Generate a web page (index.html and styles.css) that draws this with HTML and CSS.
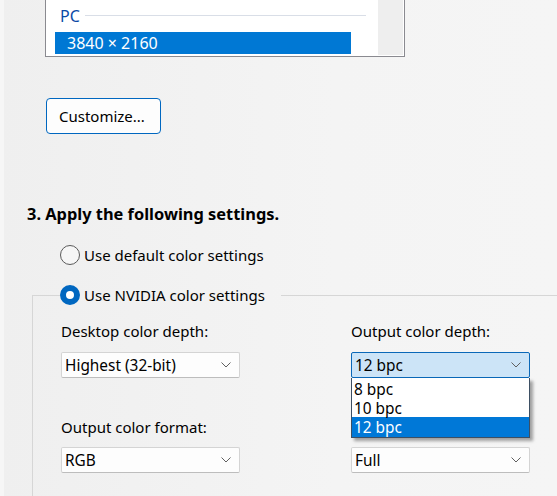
FILE: index.html
```html
<!DOCTYPE html>
<html lang="en">
  <head>
    <meta charset="UTF-8" />
    <meta name="viewport" content="width=device-width, initial-scale=1.0" />
    <title>Change resolution</title>
    <link rel="stylesheet" href="styles.css">
  </head>
  <body>
    <div class="page">
      <div class="mode-list">
        <div class="mode-items">
          <div class="mode-group">
            <span>PC</span>
            <span class="mode-rule"></span>
          </div>
          <div class="mode-item selected">3840 × 2160</div>
        </div>
        <div class="mode-scroll"></div>
      </div>

      <button type="button" class="btn">Customize...</button>

      <h2 class="step">3. Apply the following settings.</h2>

      <label class="radio">
        <span class="radio-dot"></span>
        Use default color settings
      </label>

      <fieldset class="group">
        <legend>
          <label class="radio checked">
            <span class="radio-dot"></span>
            Use NVIDIA color settings
          </label>
        </legend>

        <div class="fields">
          <div class="field">
            <div class="field-label">Desktop color depth:</div>
            <div class="combo">
              <span>Highest (32-bit)</span>
              <svg class="chevron" width="10" height="6" viewBox="0 0 10 6"><polyline points="0.5,0.5 5,5 9.5,0.5" /></svg>
            </div>
          </div>

          <div class="field">
            <div class="field-label">Output color depth:</div>
            <div class="combo focused">
              <span>12 bpc</span>
              <svg class="chevron" width="10" height="6" viewBox="0 0 10 6"><polyline points="0.5,0.5 5,5 9.5,0.5" /></svg>
              <!-- open drop-down -->
              <ul class="combo-menu">
                <li>8 bpc</li>
                <li>10 bpc</li>
                <li class="selected">12 bpc</li>
              </ul>
            </div>
          </div>

          <div class="field">
            <div class="field-label">Output color format:</div>
            <div class="combo">
              <span>RGB</span>
              <svg class="chevron" width="10" height="6" viewBox="0 0 10 6"><polyline points="0.5,0.5 5,5 9.5,0.5" /></svg>
            </div>
          </div>

          <div class="field">
            <!-- label sits under the open menu -->
            <div class="field-label"></div>
            <div class="combo">
              <span>Full</span>
              <svg class="chevron" width="10" height="6" viewBox="0 0 10 6"><polyline points="0.5,0.5 5,5 9.5,0.5" /></svg>
            </div>
          </div>
        </div>
      </fieldset>
    </div>
  </body>
</html>
```

FILE: styles.css
```css
* {
  margin: 0;
  padding: 0;
  box-sizing: border-box;
}

body {
  font-family: "Noto Sans", "Open Sans", sans-serif;
  font-size: 15px;
  color: #000;
  background: linear-gradient(90deg, #efefef 0%, #f4f4f4 60%, #f5f5f5 100%);
  height: 100vh;
  overflow: hidden;
}

.page {
  border-left: 4px solid #f6f6f6;
  height: 100%;
}

/* Resolution list (scrolled to the bottom) */
.mode-list {
  margin-left: 41px;
  width: 360px;
  height: 57px;
  display: flex;
  font-size: 16px;
  background: white;
  border: 1px solid #8a8a90;
  border-top: none;
  padding: 0 1px 1px 0;
}

.mode-items {
  flex: 1;
  padding: 5px 12px 0 9px;
}

.mode-group {
  display: flex;
  align-items: center;
  height: 22px;
  padding-left: 5px;
  color: #0b4aa6;
}

.mode-rule {
  flex: 1;
  height: 1px;
  margin-left: 5px;
  margin-top: -2px;
  background: #d9dee7;
}

.mode-item {
  height: 22px;
  line-height: 22px;
  margin-top: 5px;
  width: 296px;
  padding-left: 12px;
}

.mode-item.selected {
  background: #0078d4;
  color: white;
}

.mode-scroll {
  width: 25px;
  background: #eeeeee;
}

.btn {
  display: block;
  margin: 41px 0 0 42px;
  width: 115px;
  height: 36px;
  padding-left: 12px;
  text-align: left;
  font: inherit;
  color: #000;
  background: #fdfdfd;
  border: 1px solid #0067c0;
  border-radius: 4px;
}

.step {
  margin: 70px 0 0 23px;
  font-size: 16.4px;
  font-weight: bold;
  line-height: 20px;
}

.radio {
  display: flex;
  align-items: center;
  gap: 4px;
  height: 20px;
  line-height: 20px;
  margin: 21px 0 0 56px;
}

.radio-dot {
  width: 20px;
  height: 20px;
  border-radius: 50%;
  border: 1px solid #5a5a5a;
  background: #f6f6f6;
}

.radio.checked .radio-dot {
  border: 6px solid #0067c0;
  background: white;
}

.group {
  margin: 20px 0 0 28px;
  padding: 16px 0 40px 28px;
  border: 1px solid #d6d6d6;
  border-right: none;
  border-bottom: none;
}

.group legend {
  margin-left: -1px;
  padding-right: 16px;
}

.group legend .radio {
  margin: 0;
}

.fields {
  display: grid;
  grid-template-columns: 290px 179px;
  row-gap: 39px;
}

.field-label {
  height: 20px;
  line-height: 20px;
  margin-bottom: 11px;
}

.field:nth-child(n + 3) .field-label {
  margin-bottom: 10px;
}

.combo {
  position: relative;
  display: flex;
  align-items: center;
  justify-content: space-between;
  width: 179px;
  height: 26px;
  padding: 0 8px 0 3px;
  font-size: 15.4px;
  background: #fdfdfd;
  border: 1px solid #d4d4d4;
  border-bottom-color: #bdbdbd;
  border-radius: 2px;
}

.combo.focused {
  background: #cce4f7;
  border-color: #0a68b8;
}

.chevron polyline {
  fill: none;
  stroke: #606060;
  stroke-width: 1;
}

.combo-menu {
  position: absolute;
  top: calc(100% + 1px);
  left: -1px;
  width: 179px;
  list-style: none;
  background: white;
  border: 1px solid #3d4f63;
  border-top: none;
  padding-top: 1px;
  box-shadow: 3px 3px 3px rgba(0, 0, 0, 0.35);
  z-index: 2;
}

.combo-menu li {
  height: 19px;
  line-height: 19px;
  padding: 1px 0 0 2px;
}

.combo-menu li.selected {
  height: 20px;
  background: #0078d7;
  color: white;
}
```
